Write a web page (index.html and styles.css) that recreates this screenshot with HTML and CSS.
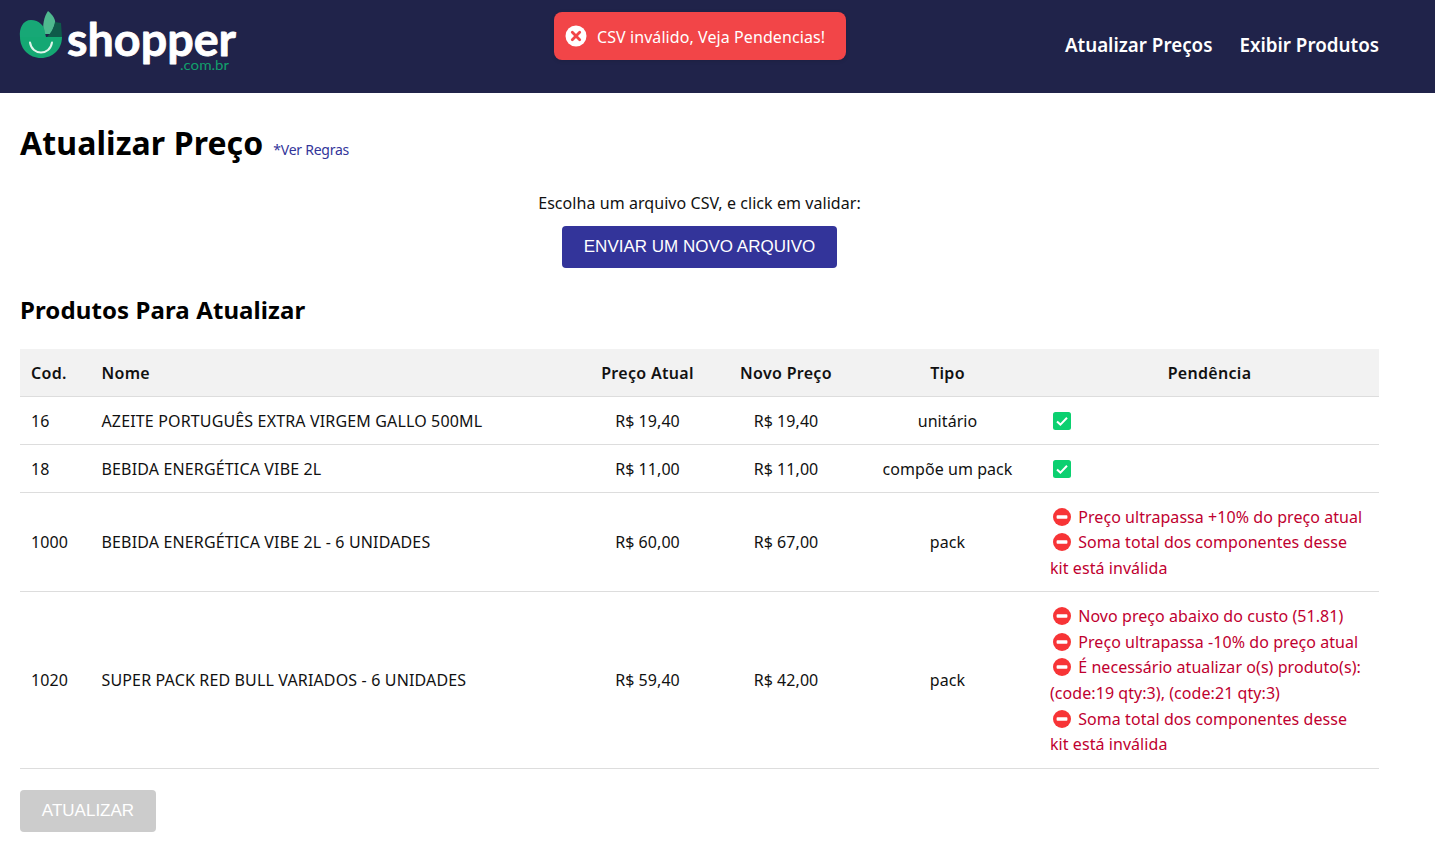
FILE: index.html
```html
<!DOCTYPE html>
<html lang="pt-BR">
<head>
<meta charset="utf-8">
<title>Atualizar Preço</title>
<link rel="stylesheet" href="styles.css">
</head>
<body>
<header class="topbar">
  <a class="logo" href="#" aria-label="shopper.com.br">
    <svg class="logo-svg" width="220" height="66" viewBox="0 0 220 66">
      <path d="M28 0 C33 4 36 9 35 13 L31 23 L24 23 C22 14 24 6 28 0Z" fill="#4fb98f"/>
      <path d="M35 11 L41 12 L42 26 L27 26 C31 22 34 17 35 11Z" fill="#0f5a4a"/>
      <path d="M0 26 C-1 17 3 9 11 9 C19 9 25 15 25 22 L26 26Z" fill="#17a876"/>
      <path d="M0 26 H42 C42 38 33 47 21 47 C9 47 0 38 0 26Z" fill="#14a873"/>
      <path d="M10 31.5 C11 38 16 41.5 21 41.5 C26 41.5 31 38 32 31.5" fill="none" stroke="#dff5ea" stroke-width="2" stroke-linecap="round"/>
      <text class="logo-word" x="47" y="45" textLength="169" lengthAdjust="spacingAndGlyphs">shopper</text>
      <text class="logo-tld" x="160" y="59" textLength="49" lengthAdjust="spacingAndGlyphs">.com.br</text>
    </svg>
  </a>
  <div class="toast" role="alert">
    <svg class="toast-icon" width="22" height="22" viewBox="0 0 22 22">
      <circle cx="11" cy="11" r="10.5" fill="#fff"/>
      <path d="M7.3 7.3 L14.7 14.7 M14.7 7.3 L7.3 14.7" stroke="#f24548" stroke-width="2.8" stroke-linecap="round"/>
    </svg>
    <span>CSV inválido, Veja Pendencias!</span>
  </div>
  <nav class="nav">
    <a href="#">Atualizar Preços</a>
    <a href="#">Exibir Produtos</a>
  </nav>
</header>

<main class="page">
  <div class="title-row">
    <h1>Atualizar Preço</h1>
    <a class="rules" href="#">*Ver Regras</a>
  </div>
  <div class="upload">
    <p>Escolha um arquivo CSV, e click em validar:</p>
    <button class="btn btn-primary" type="button">ENVIAR UM NOVO ARQUIVO</button>
  </div>
  <h2>Produtos Para Atualizar</h2>
  <table class="products">
    <colgroup>
      <col class="c-cod"><col class="c-name"><col class="c-price"><col class="c-price2"><col class="c-type"><col class="c-pend">
    </colgroup>
    <thead>
      <tr class="r-head">
        <th class="left">Cod.</th><th class="left">Nome</th><th>Preço Atual</th><th>Novo Preço</th><th>Tipo</th><th>Pendência</th>
      </tr>
    </thead>
    <tbody>
      <tr class="r-1">
        <td>16</td><td>AZEITE PORTUGUÊS EXTRA VIRGEM GALLO 500ML</td><td class="center">R$ 19,40</td><td class="center">R$ 19,40</td><td class="center">unitário</td>
        <td class="pend"><svg class="ok" width="18" height="18" viewBox="0 0 18 18"><rect width="18" height="18" x="0" y="0" rx="2.5" fill="#0bd070"/><path d="M4 9.4 L7.4 12.6 L14 5.8" fill="none" stroke="#fff" stroke-width="2"/></svg></td>
      </tr>
      <tr class="r-1">
        <td>18</td><td>BEBIDA ENERGÉTICA VIBE 2L</td><td class="center">R$ 11,00</td><td class="center">R$ 11,00</td><td class="center">compõe um pack</td>
        <td class="pend"><svg class="ok" width="18" height="18" viewBox="0 0 18 18"><rect width="18" height="18" x="0" y="0" rx="2.5" fill="#0bd070"/><path d="M4 9.4 L7.4 12.6 L14 5.8" fill="none" stroke="#fff" stroke-width="2"/></svg></td>
      </tr>
      <tr class="r-3">
        <td>1000</td><td>BEBIDA ENERGÉTICA VIBE 2L - 6 UNIDADES</td><td class="center">R$ 60,00</td><td class="center">R$ 67,00</td><td class="center">pack</td>
        <td class="pend err">
          <svg class="no" width="18" height="18" viewBox="0 0 18 18"><circle cx="9" cy="9" r="9" fill="#f73436"/><rect x="3.6" y="7.2" width="10.8" height="3.6" rx=".8" fill="#fff"/></svg> Preço ultrapassa +10% do preço atual<br>
          <svg class="no" width="18" height="18" viewBox="0 0 18 18"><circle cx="9" cy="9" r="9" fill="#f73436"/><rect x="3.6" y="7.2" width="10.8" height="3.6" rx=".8" fill="#fff"/></svg> Soma total dos componentes desse kit está inválida
        </td>
      </tr>
      <tr class="r-6">
        <td>1020</td><td>SUPER PACK RED BULL VARIADOS - 6 UNIDADES</td><td class="center">R$ 59,40</td><td class="center">R$ 42,00</td><td class="center">pack</td>
        <td class="pend err">
          <svg class="no" width="18" height="18" viewBox="0 0 18 18"><circle cx="9" cy="9" r="9" fill="#f73436"/><rect x="3.6" y="7.2" width="10.8" height="3.6" rx=".8" fill="#fff"/></svg> Novo preço abaixo do custo (51.81)<br>
          <svg class="no" width="18" height="18" viewBox="0 0 18 18"><circle cx="9" cy="9" r="9" fill="#f73436"/><rect x="3.6" y="7.2" width="10.8" height="3.6" rx=".8" fill="#fff"/></svg> Preço ultrapassa -10% do preço atual<br>
          <svg class="no" width="18" height="18" viewBox="0 0 18 18"><circle cx="9" cy="9" r="9" fill="#f73436"/><rect x="3.6" y="7.2" width="10.8" height="3.6" rx=".8" fill="#fff"/></svg> É necessário atualizar o(s) produto(s): (code:19 qty:3), (code:21 qty:3)<br>
          <svg class="no" width="18" height="18" viewBox="0 0 18 18"><circle cx="9" cy="9" r="9" fill="#f73436"/><rect x="3.6" y="7.2" width="10.8" height="3.6" rx=".8" fill="#fff"/></svg> Soma total dos componentes desse kit está inválida
        </td>
      </tr>
    </tbody>
  </table>
  <button class="btn btn-disabled" type="button" disabled>ATUALIZAR</button>
</main>
</body>
</html>
```
FILE: styles.css
```css
* { box-sizing: border-box; }
html, body { margin: 0; padding: 0; }
body {
  font-family: "Noto Sans", "Open Sans", sans-serif;
  font-size: 16px;
  letter-spacing: .06px;
  line-height: 25.6px;
  color: #111;
  background: #fff;
}
a { text-decoration: none; color: inherit; }

.topbar {
  position: relative;
  height: 93px;
  background: #20234a;
  display: flex;
  align-items: center;
  justify-content: space-between;
  padding: 0 56px 0 20px;
}
.logo { display: block; height: 66px; align-self: flex-start; margin-top: 11px; }
.logo-svg { display: block; overflow: visible; }
.logo-word { font-family: "Lato", sans-serif; font-weight: 700; font-size: 46px; fill: #fff; stroke: #fff; stroke-width: .8px; stroke-linejoin: round; letter-spacing: 0; }
.logo-tld { font-family: "Lato", sans-serif; font-size: 14px; fill: #12a06c; letter-spacing: 0; }

.toast {
  position: absolute;
  left: 554px;
  top: 12px;
  width: 292px;
  height: 48px;
  background: #f24548;
  border-radius: 8px;
  color: #fff;
  display: flex;
  align-items: center;
  gap: 10px;
  padding: 4px 0 0 11px;
  font-size: 16px;
  letter-spacing: .08px;
  box-shadow: 0 1px 4px rgba(0,0,0,.12);
}
.toast-icon { flex: none; margin-top: -5px; }

.nav { display: flex; gap: 27px; margin-top: -1px; }
.nav a { color: #fff; font-size: 18.8px; font-weight: 600; letter-spacing: 0; }

.page { padding: 0 56px 0 20px; }

.title-row { display: flex; align-items: baseline; gap: 10px; padding-top: 26px; }
h1 { margin: 0; font-size: 32px; line-height: 48px; font-weight: 700; color: #000; letter-spacing: .1px; }
.rules { font-size: 14px; color: #33359a; letter-spacing: -.25px; }

.upload { display: flex; flex-direction: column; align-items: center; margin-top: 24px; }
.upload p { margin: 0; height: 25px; }
.btn {
  display: block;
  height: 42px;
  border: 0;
  border-radius: 4px;
  font-family: "Liberation Sans", Arial, sans-serif;
  font-size: 17px;
  letter-spacing: 0;
  color: #fff;
  padding: 0 21.5px;
}
.btn-primary { background: #33349a; margin-top: 10px; }
.btn-disabled { background: #ccc; margin-top: 21px; width: 136px; padding: 0; }

h2 { margin: 24px 0 21px; font-size: 24px; line-height: 36px; font-weight: 700; color: #000; letter-spacing: .1px; }

.products { width: 1359px; border-collapse: collapse; table-layout: fixed; }
.c-cod { width: 71px; }
.c-name { width: 487px; }
.c-price { width: 139px; }
.c-price2 { width: 138px; }
.c-type { width: 185px; }
.c-pend { width: 339px; }
.r-head { height: 47px; }
.r-1 { height: 48px; }
.r-3 { height: 99px; }
.r-6 { height: 177px; }
.products th { background: #f2f2f2; padding: 11px 11px 8px; font-size: 16px; font-weight: 600; color: #111; text-align: center; border-bottom: 1px solid #ddd; white-space: nowrap; letter-spacing: .3px; }
.products th.left { text-align: left; }
.products td { padding: 11px 11px 8px; border-bottom: 1px solid #ddd; vertical-align: middle; }
.products td.center { text-align: center; }
.products td:nth-child(2) { padding-left: 10.5px; white-space: nowrap; letter-spacing: .15px; }
.products th:nth-child(2) { padding-left: 10.5px; }
.products td.pend { padding-left: 10px; padding-right: 11px; }
.err { color: #c0002f; }
.ok, .no { vertical-align: -3px; margin: 0 3px 0 3px; }
```
